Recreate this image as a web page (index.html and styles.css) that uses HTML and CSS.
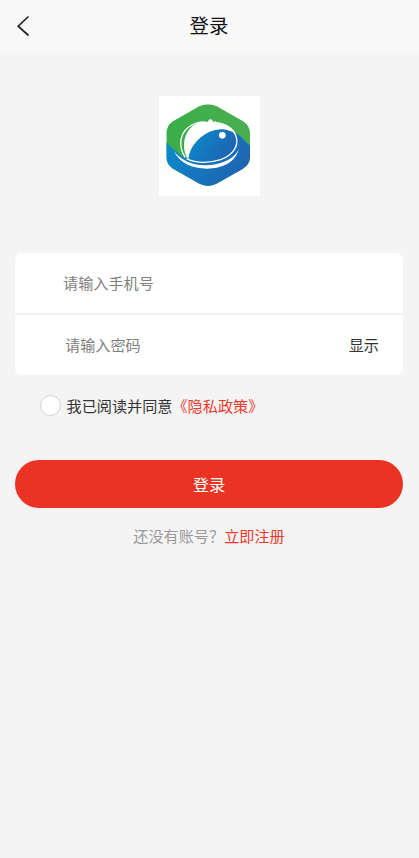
FILE: index.html
```html
<!DOCTYPE html>
<html lang="zh-CN">
<head>
<meta charset="utf-8">
<meta name="viewport" content="width=device-width, initial-scale=1">
<title>登录</title>
<link rel="stylesheet" href="styles.css">
</head>
<body>
<header class="navbar">
  <svg class="back" viewBox="0 0 14 22" aria-hidden="true"><path d="M12.5 1.5 2.2 11.2 12.5 20.5"/></svg>
  <h1 class="title">登录</h1>
</header>
<main class="page">
  <div class="logo">
    <svg viewBox="15 18 303 300" aria-hidden="true">
      <defs>
        <clipPath id="hex"><path d="M136 49Q162 37 188 49L267 94Q287 106 288 130V201Q287 224 267 236L190 280Q162 296 134 280L57 236Q38 224 37 201V130Q38 106 57 94Z"/></clipPath>
        <linearGradient id="sea" x1="0" y1="0" x2="1" y2="0.5"><stop offset="0" stop-color="#0790d0"/><stop offset="1" stop-color="#1f63b0"/></linearGradient>
        <linearGradient id="leaf" x1="0" y1="0" x2="1" y2="0"><stop offset="0" stop-color="#39ae48"/><stop offset="1" stop-color="#4bae50"/></linearGradient>
      </defs>
      <g clip-path="url(#hex)">
        <path fill="url(#leaf)" d="M30 30H300V300H30Z"/>
        <path fill="url(#sea)" d="M30 148C52 174 72 193 98 205L240 124Q268 144 295 176V300H30Z"/>
      </g>
      <path fill="#39ae48" d="M98 205C68 180 72 120 120 101L150 120Z"/>
      <path fill="#fff" d="M98 202C82 168 90 128 118 106C128 99 138 97 148 95L153 93 156 97 163 94A6 6 0 0 1 176 94L180 97 184 93 188 97C213 101 235 110 246 132L230 123C178 112 108 148 104 207Z"/>
      <path fill="url(#sea)" d="M104 207C108 160 158 115 207 118C234 120 247 137 246 157C244 193 193 218 143 214C128 213 112 210 104 207Z"/>
      <path fill="none" stroke="#fff" stroke-width="4" d="M98 206C121 219 163 221 200 209C242 194 260 160 241 128C232 112 212 103 190 98"/>
      <path fill="none" stroke="#fff" stroke-width="4" d="M93 202C71 166 76 122 119 102Q135 96 148 96"/>
      <path fill="#fff" d="M60 184C90 222 139 232 184 223C220 215 243 202 254 178C244 218 203 236 159 236C115 236 77 220 60 184Z"/>
      <circle cx="205" cy="136" r="10" fill="#fff"/>
    </svg>
  </div>
  <form class="card">
    <div class="row"><input class="field phone" type="tel" placeholder="请输入手机号"></div>
    <div class="row"><input class="field" type="password" placeholder="请输入密码"><span class="show">显示</span></div>
  </form>
  <label class="agree"><span class="radio"></span><span class="terms">我已阅读并同意<a class="link">《隐私政策》</a></span></label>
  <button class="submit" type="button">登录</button>
  <p class="register">还没有账号？<a class="link">立即注册</a></p>
</main>
</body>
</html>
```
FILE: styles.css
```css
* { box-sizing: border-box; }
body {
  margin: 0;
  min-height: 858px;
  background: #f4f4f4;
  color: #333;
  font-family: "Noto Sans CJK SC", sans-serif;
  font-size: 15.15px;
  line-height: 22px;
}
.navbar {
  display: grid;
  grid-template-columns: 59px 1fr 60px;
  align-items: center;
  height: 52px;
  background: #f8f8f8;
}
.back {
  width: 14px;
  height: 22px;
  margin-left: 16px;
  fill: none;
  stroke: #222;
  stroke-width: 1.7;
}
.title {
  margin: 0;
  padding-bottom: 2px;
  color: #111;
  font-size: 19.4px;
  font-weight: 400;
  line-height: 28px;
  text-align: center;
}
.page {
  display: flex;
  flex-direction: column;
  padding: 44px 16px 0 15px;
}
.logo {
  align-self: center;
  width: 101px;
  height: 100px;
  background: #fff;
}
.logo svg { display: block; width: 100%; height: 100%; }
.card {
  margin-top: 57px;
  overflow: hidden;
  border-radius: 7px;
  background: #fff;
}
.row {
  display: flex;
  align-items: center;
  height: 60px;
  padding: 0 24px 0 50px;
}
.row + .row {
  height: 62px;
  padding-bottom: 2px;
  border-top: 2px solid #f3f3f3;
}
.field {
  flex: 1;
  min-width: 0;
  padding: 0;
  border: 0;
  outline: 0;
  background: none;
  font: inherit;
}
.field.phone { margin: 0 0 2px -2px; }
.field::placeholder { color: #808080; opacity: 1; }
.agree {
  display: flex;
  align-items: center;
  gap: 5.5px;
  height: 22px;
  margin: 19px 0 0 25px;
}
.terms { padding-bottom: 1px; }
.radio {
  width: 21px;
  height: 21px;
  border: 1px solid #d1d1d1;
  border-radius: 50%;
  background: #fff;
}
.link { color: #ea3a2c; }
.submit {
  height: 48px;
  margin-top: 44px;
  padding: 0;
  border: 0;
  border-radius: 24px;
  background: #ea3323;
  color: #fff;
  font: inherit;
  font-size: 16.3px;
}
.register {
  margin: 16px 0 0;
  color: #999;
  text-align: center;
}
```
